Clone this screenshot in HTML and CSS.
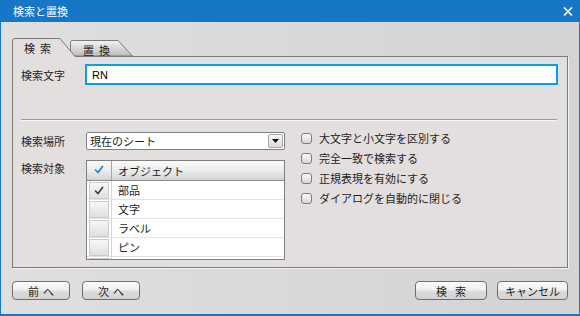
FILE: index.html
```html
<!DOCTYPE html>
<html lang="ja">
<head>
    <meta charset="UTF-8">
    <title>検索と置換</title>
    <link rel="stylesheet" href="styles.css">
</head>
<body>
    <div class="dialog">
        <div class="titlebar">
            <span class="title">検索と置換</span>
            <svg class="close" width="10" height="9" viewBox="0 0 10 9">
                <path d="M1 0.5 L9 8.5 M9 0.5 L1 8.5" stroke="#fff" stroke-width="1.6" fill="none"/>
            </svg>
        </div>

        <div class="dialog-body">
            <div class="tabs">
                <div class="tab tab-active">
                    <svg class="tab-shape" width="64" height="20" viewBox="0 0 64 20">
                        <path d="M0.5 20 V4 Q0.5 1.5 3 1.5 H48 L63.5 20 Z" fill="#e2dfde"/>
                        <path d="M0.5 20 V4 Q0.5 1.5 3 1.5 H48 L63 19.5" fill="none" stroke="#7b7b7b"/>
                    </svg>
                    <span class="tab-label">検索</span>
                </div>
                <div class="tab tab-inactive">
                    <svg class="tab-shape" width="63" height="19" viewBox="0 0 63 19">
                        <defs>
                            <linearGradient id="tabGrad" x1="0" y1="0" x2="0" y2="1">
                                <stop offset="0" stop-color="#f3f3f3"/>
                                <stop offset="1" stop-color="#bcbcbc"/>
                            </linearGradient>
                        </defs>
                        <path d="M0.5 19 V5.5 Q0.5 3.5 2.5 3.5 H48 L62.5 19 Z" fill="url(#tabGrad)" stroke="#7b7b7b"/>
                    </svg>
                    <span class="tab-label">置換</span>
                </div>
            </div>

            <div class="panel">
                <div class="find-row">
                    <label class="field-label" for="findText">検索文字</label>
                    <input class="text-input" id="findText" type="text" value="RN">
                </div>

                <div class="separator"></div>

                <div class="options">
                    <div class="left-col">
                        <div class="opt-row">
                            <span class="opt-label">検索場所</span>
                            <div class="select">
                                <span class="select-text">現在のシート</span>
                                <span class="select-btn">
                                    <svg width="7" height="4" viewBox="0 0 7 4"><path d="M0 0 H7 L3.5 4 Z" fill="#111"/></svg>
                                </span>
                            </div>
                        </div>
                        <div class="opt-row target-row">
                            <span class="opt-label">検索対象</span>
                            <div class="list">
                                <div class="list-head">
                                    <div class="cell-check">
                                        <svg class="head-check" width="10" height="9" viewBox="0 0 10 9">
                                            <polyline points="1,4.5 4,7.5 9,1" fill="none" stroke="#1a86d8" stroke-width="1.7"/>
                                        </svg>
                                    </div>
                                    <div class="cell-name">オブジェクト</div>
                                </div>
                                <div class="list-row">
                                    <div class="cell-check">
                                        <span class="box">
                                            <svg width="10" height="9" viewBox="0 0 10 9">
                                                <polyline points="1,4.5 4,7.5 9,1" fill="none" stroke="#3c3c3c" stroke-width="1.6"/>
                                            </svg>
                                        </span>
                                    </div>
                                    <div class="cell-name">部品</div>
                                </div>
                                <div class="list-row">
                                    <div class="cell-check"><span class="box"></span></div>
                                    <div class="cell-name">文字</div>
                                </div>
                                <div class="list-row">
                                    <div class="cell-check"><span class="box"></span></div>
                                    <div class="cell-name">ラベル</div>
                                </div>
                                <div class="list-row">
                                    <div class="cell-check"><span class="box"></span></div>
                                    <div class="cell-name">ピン</div>
                                </div>
                                <!-- next row is scrolled out of view -->
                                <div class="list-row">
                                    <div class="cell-check"><span class="box"></span></div>
                                    <div class="cell-name"></div>
                                </div>
                            </div>
                        </div>
                    </div>

                    <div class="check-col">
                        <div class="check-row"><span class="cb"></span>大文字と小文字を区別する</div>
                        <div class="check-row"><span class="cb"></span>完全一致で検索する</div>
                        <div class="check-row"><span class="cb"></span>正規表現を有効にする</div>
                        <div class="check-row"><span class="cb"></span>ダイアログを自動的に閉じる</div>
                    </div>
                </div>
            </div>

            <div class="footer">
                <div class="btn-group btn-group-left">
                    <button class="btn btn-nav">前へ</button>
                    <button class="btn btn-nav">次へ</button>
                </div>
                <div class="btn-group btn-group-right">
                    <button class="btn btn-search">検索</button>
                    <button class="btn btn-cancel">キャンセル</button>
                </div>
            </div>
        </div>
    </div>
</body>
</html>
```

FILE: styles.css
```css
* {
    box-sizing: border-box;
}

body {
    margin: 0;
    font-family: "Noto Sans CJK JP", "Noto Sans", sans-serif;
    font-size: 11px;
    line-height: 14px;
    color: #1e1e1e;
}

.dialog {
    width: 580px;
    height: 316px;
    display: flex;
    flex-direction: column;
}

.titlebar {
    height: 22px;
    flex-shrink: 0;
    background-color: #1777c7;
    color: #fff;
    display: flex;
    align-items: center;
    justify-content: space-between;
    padding: 0 7px 0 13px;
}

.dialog-body {
    flex: 1;
    border: 1px solid #1777c7;
    border-top: none;
    border-bottom-width: 2px;
    background: linear-gradient(to right, #dfdfdf, #d3d3d3);
    padding: 15px 11px 0;
}

/* tabs */
.tabs {
    display: flex;
    height: 20px;
    margin-bottom: -1px;
    position: relative;
    z-index: 1;
}

.tab {
    position: relative;
    height: 20px;
}

.tab-active {
    width: 64px;
    z-index: 2;
}

.tab-inactive {
    width: 63px;
    margin-left: -6px;
    z-index: 1;
}

.tab-shape {
    position: absolute;
    left: 0;
    top: 0;
}

.tab-label {
    position: relative;
    display: block;
    letter-spacing: 5px;
}

.tab-active .tab-label {
    padding: 4px 0 0 12px;
}

.tab-inactive .tab-label {
    padding: 6px 0 0 13px;
}

/* panel */
.panel {
    height: 212px;
    border: 1px solid #7b7b7b;
    background-color: #e2dfde;
    box-shadow: 1px 1px 0 #f2f2f2;
    padding: 7px 9px 0 8px;
}

.find-row {
    display: flex;
    align-items: center;
    height: 21px;
}

.field-label {
    width: 64px;
    flex-shrink: 0;
}

.text-input {
    flex: 1;
    height: 21px;
    border: 2px solid #0ba0e6;
    background-color: #fff;
    padding: 0 5px;
    font-family: "Liberation Sans", Arial, sans-serif;
    font-size: 11px;
    color: #000;
    outline: none;
    margin: 0;
}

.separator {
    margin: 34px 1px 0 0;
    height: 2px;
    border-top: 1px solid #9a9a9a;
    border-bottom: 1px solid #f7f7f7;
}

.options {
    display: flex;
    margin-top: 11px;
}

.left-col {
    width: 264px;
    flex-shrink: 0;
}

.opt-row {
    display: flex;
}

.opt-label {
    width: 65px;
    flex-shrink: 0;
    padding-top: 2px;
}

.target-row {
    margin-top: 10px;
}

.target-row .opt-label {
    padding-top: 1px;
}

.select {
    width: 199px;
    height: 18px;
    border: 1px solid #7f7f7f;
    border-radius: 2px;
    background-color: #fff;
    display: flex;
    align-items: center;
    justify-content: space-between;
    padding: 0 1px 0 3px;
}

.select-btn {
    width: 15px;
    height: 14px;
    border: 1px solid #a8a8a8;
    border-radius: 2px;
    background: linear-gradient(#f7f7f7, #dadada);
    display: flex;
    align-items: center;
    justify-content: center;
}

/* object list */
.list {
    width: 199px;
    height: 100px;
    border: 1px solid #7f7f7f;
    background-color: #fff;
    overflow: hidden;
}

.list-head {
    display: flex;
    height: 20px;
    border-bottom: 1px solid #8c8c8c;
    background: linear-gradient(#fbfbfb, #ececec 50%, #d3d3d3);
}

.list-head .cell-check {
    border-right-color: #a6a6a6;
}

.head-check {
    margin-top: -2px;
}

.list-row {
    display: flex;
    height: 19px;
    border-bottom: 1px solid #e3e3e3;
}

.cell-check {
    width: 25px;
    flex-shrink: 0;
    border-right: 1px solid #d6d6d6;
    display: flex;
    align-items: center;
    justify-content: center;
}

.cell-name {
    padding-left: 6px;
    display: flex;
    align-items: center;
}

.box {
    width: 20px;
    height: 17px;
    border: 1px solid #cbcbcb;
    background: linear-gradient(#f7f7f7, #e0e0e0);
    display: flex;
    align-items: center;
    justify-content: center;
}

/* options on the right */
.check-col {
    margin-left: 16px;
    margin-top: -4px;
}

.check-row {
    display: flex;
    align-items: center;
    height: 20px;
    gap: 7px;
}

.cb {
    width: 11px;
    height: 11px;
    border: 1px solid #7d7d7d;
    border-radius: 3px;
    background: linear-gradient(#fdfdfd, #d4d4d4);
}

/* buttons */
.footer {
    display: flex;
    justify-content: space-between;
    margin-top: 13px;
}

.btn-group {
    display: flex;
}

.btn-group-left {
    gap: 12px;
}

.btn-group-right {
    gap: 10px;
}

.btn {
    height: 19px;
    margin: 0;
    padding: 0;
    border: 1px solid #6f6f6f;
    border-radius: 4px;
    background: linear-gradient(#fdfdfd, #f0f0f0 45%, #dcdcdc 55%, #d2d2d2);
    font-family: "Noto Sans CJK JP", "Noto Sans", sans-serif;
    font-size: 11px;
    line-height: 14px;
    color: #1e1e1e;
    display: flex;
    align-items: center;
    justify-content: center;
}

.btn-nav {
    width: 58px;
    letter-spacing: 4px;
    padding-left: 4px;
}

.btn-search {
    width: 72px;
    letter-spacing: 8px;
    padding-left: 8px;
}

.btn-cancel {
    width: 71px;
}
```
